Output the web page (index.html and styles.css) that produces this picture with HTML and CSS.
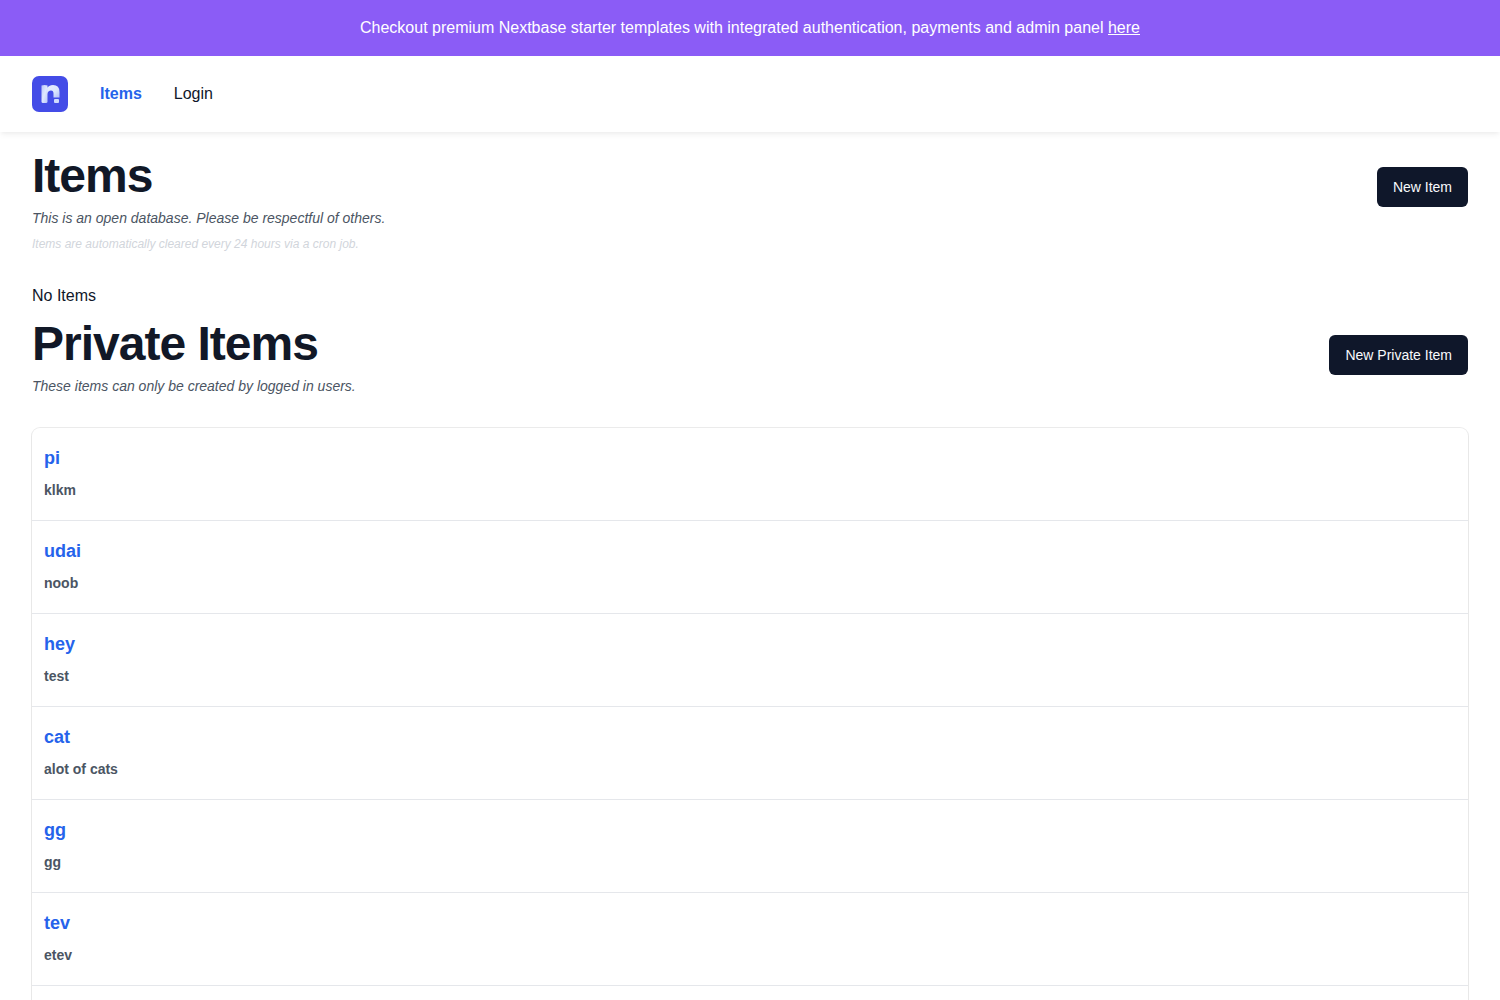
FILE: index.html
```html
<!DOCTYPE html>
<html lang="en">
<head>
<meta charset="utf-8">
<meta name="viewport" content="width=device-width, initial-scale=1">
<title>Nextbase</title>
<link rel="stylesheet" href="styles.css">
</head>
<body>
<div class="banner">Checkout premium Nextbase starter templates with integrated authentication, payments and admin panel <a href="#">here</a></div>
<header class="header">
  <a class="logo" href="#" aria-label="Nextbase">
    <svg viewBox="0 0 36 36" width="36" height="36" aria-hidden="true">
      <defs>
        <linearGradient id="stem" x1="0" y1="0" x2="1" y2="1">
          <stop offset="0" stop-color="#b9c5f9"/>
          <stop offset=".5" stop-color="#dfe8fe"/>
          <stop offset="1" stop-color="#b9c5f9"/>
        </linearGradient>
        <linearGradient id="arch" x1="0" y1="0" x2="1" y2="1">
          <stop offset="0" stop-color="#e8effe"/>
          <stop offset=".6" stop-color="#dbe5fd"/>
          <stop offset="1" stop-color="#b3bff8"/>
        </linearGradient>
      </defs>
      <rect width="36" height="36" rx="7" fill="#444ce7"/>
      <path fill="url(#arch)" d="M14 13Q17 9 21 9Q27.500 9 27.500 16V21.500H21.500V17.500Q21.500 14.500 19 14.500Q16 14.500 15 18Z"/>
      <path fill="url(#stem)" d="M9.500 9.500Q12.500 8.500 15.500 9.500V25.500Q15.500 27 14 27H11Q9.500 27 9.500 25.500Z"/>
      <rect x="22" y="23" width="5" height="4" rx="1" fill="#d0dbfc"/>
    </svg>
  </a>
  <nav class="nav">
    <a class="nav-link active" href="#">Items</a>
    <a class="nav-link" href="#">Login</a>
  </nav>
</header>
<main class="main">
  <section class="section">
    <div class="heading">
      <div class="intro">
        <h1>Items</h1>
        <p class="lead">This is an open database. Please be respectful of others.</p>
        <p class="note">Items are automatically cleared every 24 hours via a cron job.</p>
      </div>
      <button class="button" type="button">New Item</button>
    </div>
    <p class="empty">No Items</p>
  </section>
  <section class="section">
    <div class="heading">
      <div class="intro">
        <h1>Private Items</h1>
        <p class="lead">These items can only be created by logged in users.</p>
      </div>
      <button class="button" type="button">New Private Item</button>
    </div>
    <ul class="list">
      <li><a href="#">pi</a><p>klkm</p></li>
      <li><a href="#">udai</a><p>noob</p></li>
      <li><a href="#">hey</a><p>test</p></li>
      <li><a href="#">cat</a><p>alot of cats</p></li>
      <li><a href="#">gg</a><p>gg</p></li>
      <li><a href="#">tev</a><p>etev</p></li>
      <li></li>
    </ul>
  </section>
</main>
</body>
</html>
```
FILE: styles.css
```css
*, *::before, *::after { box-sizing: border-box; }

body {
  margin: 0;
  background: #fff;
  color: #0f172a;
  font: 16px/24px "Liberation Sans", Arial, Helvetica, sans-serif;
}

h1, p, ul { margin: 0; padding: 0; }
a { color: inherit; text-decoration: none; }

.banner {
  padding: 16px;
  background: #8b5cf6;
  color: #fff;
  text-align: center;
}
.banner a { text-decoration: underline; }

.header {
  display: flex;
  align-items: center;
  gap: 32px;
  padding: 20px 32px;
  box-shadow: 0 4px 6px -1px rgba(0, 0, 0, .05), 0 2px 4px -1px rgba(0, 0, 0, .03);
}
.logo, .logo svg { display: block; }
.nav { display: flex; gap: 32px; }
.active { color: #2563eb; font-weight: 700; }

.main {
  display: grid;
  gap: 12px;
  padding: 20px 32px;
}
.heading {
  display: flex;
  align-items: flex-start;
  justify-content: space-between;
  gap: 16px;
}
.intro {
  display: grid;
  gap: 8px;
}
h1 {
  color: #111827;
  font-size: 48px;
  line-height: 48px;
  font-weight: 800;
  letter-spacing: -1px;
}
.lead {
  color: #4b5563;
  font-size: 14px;
  line-height: 20px;
  font-style: italic;
}
.note {
  color: #d1d5db;
  font-size: 12px;
  line-height: 16px;
  font-style: italic;
}
.button {
  height: 40px;
  margin-top: 15px;
  padding: 0 16px;
  border: 0;
  border-radius: 6px;
  background: #0f172a;
  color: #f8fafc;
  font: 500 14px/20px "Liberation Sans", Arial, Helvetica, sans-serif;
  white-space: nowrap;
  cursor: pointer;
}
.empty { margin-top: 32px; }

.list {
  margin-top: 32px;
  border-radius: 8px;
  box-shadow: 0 0 0 1px rgba(0, 0, 0, .08), 0 1px 2px rgba(0, 0, 0, .05);
  list-style: none;
}
.list li { padding: 16px 12px 20px; }
.list li + li { border-top: 1px solid #e5e7eb; }
.list a {
  color: #2563eb;
  font-size: 18px;
  line-height: 28px;
  font-weight: 700;
}
.list p {
  margin-top: 8px;
  color: #4b5563;
  font-size: 14px;
  line-height: 20px;
  font-weight: 700;
}
```
